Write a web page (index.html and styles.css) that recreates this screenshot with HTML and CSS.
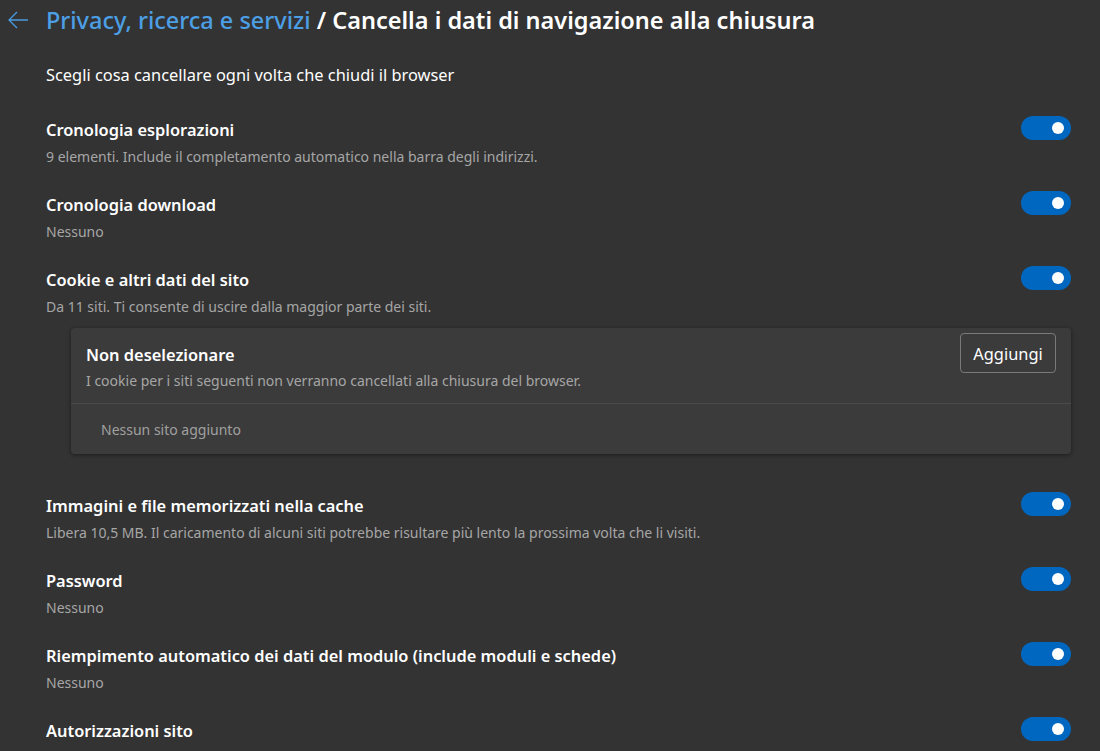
FILE: index.html
```html
<!DOCTYPE html>
<html lang="it">
<head>
<meta charset="utf-8">
<title>Cancella i dati di navigazione alla chiusura</title>
<link rel="stylesheet" href="styles.css">
</head>
<body>
<header class="header">
  <button class="back" aria-label="Indietro">
    <svg width="20" height="18" viewBox="0 0 20 18"><path d="M9 1 L1 9 L9 17 M1 9 H20" fill="none" stroke="#4a9ae0" stroke-width="1.3"/></svg>
  </button>
  <h1 class="title"><span class="crumb">Privacy, ricerca e servizi</span> / Cancella i dati di navigazione alla chiusura</h1>
</header>
<main class="content">
  <p class="intro">Scegli cosa cancellare ogni volta che chiudi il browser</p>

  <div class="row">
    <div class="text">
      <div class="label">Cronologia esplorazioni</div>
      <div class="desc">9 elementi. Include il completamento automatico nella barra degli indirizzi.</div>
    </div>
    <span class="toggle"><span class="knob"></span></span>
  </div>

  <div class="row">
    <div class="text">
      <div class="label">Cronologia download</div>
      <div class="desc">Nessuno</div>
    </div>
    <span class="toggle"><span class="knob"></span></span>
  </div>

  <div class="row">
    <div class="text">
      <div class="label">Cookie e altri dati del sito</div>
      <div class="desc">Da 11 siti. Ti consente di uscire dalla maggior parte dei siti.</div>
    </div>
    <span class="toggle"><span class="knob"></span></span>
  </div>

  <section class="card">
    <div class="card-head">
      <div class="card-top">
        <div class="card-title">Non deselezionare</div>
        <button class="btn">Aggiungi</button>
      </div>
      <div class="card-desc">I cookie per i siti seguenti non verranno cancellati alla chiusura del browser.</div>
    </div>
    <div class="card-body">Nessun sito aggiunto</div>
  </section>

  <div class="row">
    <div class="text">
      <div class="label">Immagini e file memorizzati nella cache</div>
      <div class="desc">Libera 10,5 MB. Il caricamento di alcuni siti potrebbe risultare più lento la prossima volta che li visiti.</div>
    </div>
    <span class="toggle"><span class="knob"></span></span>
  </div>

  <div class="row">
    <div class="text">
      <div class="label">Password</div>
      <div class="desc">Nessuno</div>
    </div>
    <span class="toggle"><span class="knob"></span></span>
  </div>

  <div class="row">
    <div class="text">
      <div class="label">Riempimento automatico dei dati del modulo (include moduli e schede)</div>
      <div class="desc">Nessuno</div>
    </div>
    <span class="toggle"><span class="knob"></span></span>
  </div>

  <div class="row">
    <div class="text">
      <div class="label">Autorizzazioni sito</div>
    </div>
    <span class="toggle"><span class="knob"></span></span>
  </div>
</main>
</body>
</html>
```
FILE: styles.css
```css
html, body {
  margin: 0;
  padding: 0;
  background: #333333;
  color: #ffffff;
  font-family: "Noto Sans", "Open Sans", sans-serif;
  overflow: hidden;
}

.header {
  display: flex;
  align-items: center;
  height: 40px;
  padding-left: 8px;
}

.back {
  display: flex;
  align-items: center;
  background: none;
  border: 0;
  padding: 0;
  margin: 0 18px 0 0;
  width: 20px;
  height: 18px;
  cursor: pointer;
}

.title {
  margin: 0;
  font-size: 23.5px;
  font-weight: 600;
  line-height: 32px;
  color: #ffffff;
  white-space: nowrap;
}

.crumb {
  color: #4c9fe5;
  font-weight: 500;
}

.content {
  padding: 0 29px 0 46px;
}

.intro {
  margin: 24px 0 0;
  font-size: 16.4px;
  line-height: 22px;
}

.row {
  display: flex;
  justify-content: space-between;
  align-items: flex-start;
  padding: 0;
  margin-top: 26px;
}

.intro + .row {
  margin-top: 32px;
}

.card + .row {
  margin-top: 40px;
}

.text {
  display: flex;
  flex-direction: column;
  gap: 5px;
}

.label {
  font-size: 16.4px;
  font-weight: 600;
  line-height: 24px;
}

.desc {
  font-size: 14px;
  line-height: 20px;
  color: #a6a6a6;
}

.toggle {
  display: flex;
  align-items: center;
  justify-content: flex-end;
  width: 50px;
  height: 24px;
  padding-right: 7px;
  box-sizing: border-box;
  border-radius: 12px;
  background: #0067c0;
  margin-top: -2px;
  flex-shrink: 0;
}

.knob {
  width: 12px;
  height: 12px;
  border-radius: 50%;
  background: #ffffff;
}

.card {
  margin: 11px 0 0 25px;
  background: #3b3b3b;
  border-radius: 4px;
  box-shadow: 0 1px 4px rgba(0, 0, 0, 0.45);
}

.card-head {
  padding: 5px 15px 12px 15px;
  border-bottom: 1px solid #4b4b4b;
}

.card-top {
  display: flex;
  justify-content: space-between;
  align-items: center;
}

.card-title {
  font-size: 16.4px;
  font-weight: 600;
  line-height: 24px;
  padding-top: 4px;
}

.btn {
  width: 96px;
  height: 40px;
  background: transparent;
  border: 1px solid #7a7a7a;
  border-radius: 4px;
  color: #ffffff;
  font-family: inherit;
  font-size: 16.4px;
}

.card-desc {
  margin-top: -2px;
  font-size: 14px;
  line-height: 20px;
  color: #a6a6a6;
}

.card-body {
  padding: 16px 30px 14px;
  font-size: 14px;
  line-height: 20px;
  color: #a0a0a0;
}
```
